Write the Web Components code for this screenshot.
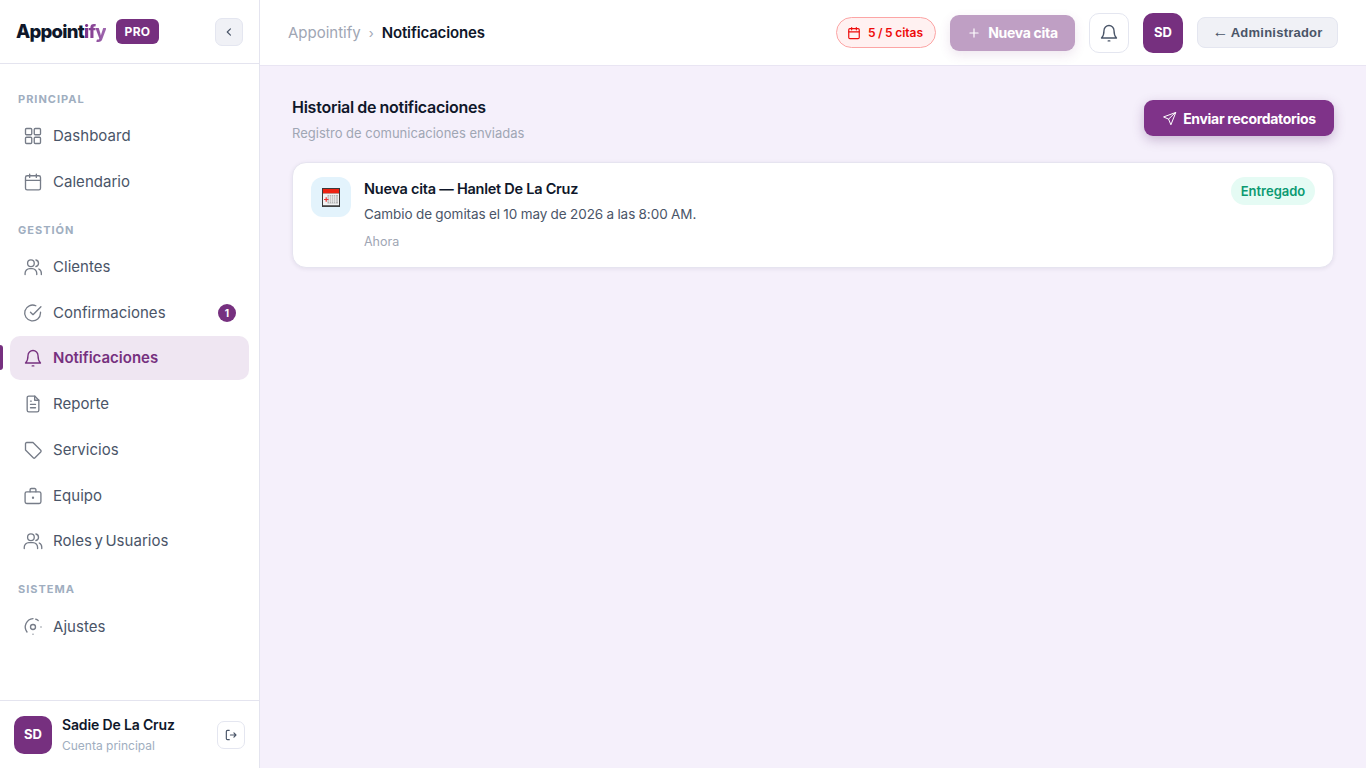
<!DOCTYPE html>
<html lang="es"><head><meta charset="utf-8"><title>Appointify</title>
<style>
html,body{margin:0;height:100%;overflow:hidden}
body{font-family:Inter,"Noto Sans",sans-serif;color:#0f172a;background:#f5f0fb}
</style></head><body>
<app-shell>
  <side-bar slot="side">
    <nav-section label="Principal">
      <nav-item icon="grid">Dashboard</nav-item>
      <nav-item icon="calendar">Calendario</nav-item>
    </nav-section>
    <nav-section label="Gestión">
      <nav-item icon="users">Clientes</nav-item>
      <nav-item icon="check" badge="1">Confirmaciones</nav-item>
      <nav-item icon="bell" active>Notificaciones</nav-item>
      <nav-item icon="file">Reporte</nav-item>
      <nav-item icon="tag">Servicios</nav-item>
      <nav-item icon="case">Equipo</nav-item>
      <nav-item icon="users2">Roles y Usuarios</nav-item>
    </nav-section>
    <nav-section label="Sistema">
      <nav-item icon="gear">Ajustes</nav-item>
    </nav-section>
  </side-bar>
  <top-bar slot="top"></top-bar>
  <page-head slot="main" title="Historial de notificaciones" sub="Registro de comunicaciones enviadas"></page-head>
  <notif-card slot="main" heading="Nueva cita — Hanlet De La Cruz" body="Cambio de gomitas el 10 may de 2026 a las 8:00 AM." time="Ahora" status="Entregado"></notif-card>
</app-shell>
<script>
const svg=(inner,s=20,sw=1.6,extra='')=>`<svg width="${s}" height="${s}" viewBox="0 0 24 24" fill="none" stroke="currentColor" stroke-width="${sw}" stroke-linecap="round" stroke-linejoin="round" ${extra}>${inner}</svg>`;
const ICONS={
 grid:'<rect x="3" y="3" width="7.5" height="7.5" rx="1.2"/><rect x="13.5" y="3" width="7.5" height="7.5" rx="1.2"/><rect x="3" y="13.5" width="7.5" height="7.5" rx="1.2"/><rect x="13.5" y="13.5" width="7.5" height="7.5" rx="1.2"/>',
 calendar:'<rect x="3" y="4.5" width="18" height="17" rx="2"/><path d="M3 10h18M8 2.5v4M16 2.5v4"/>',
 users:'<circle cx="9.5" cy="7.5" r="4"/><path d="M2.5 21v-1.5A5.5 5.5 0 0 1 8 14h3a5.5 5.5 0 0 1 5.5 5.5V21M15.5 3.6a4 4 0 0 1 0 7.8M19 14.4a5.5 5.5 0 0 1 3 5V21"/>',
 users2:'<circle cx="9.5" cy="7.5" r="4"/><path d="M1.5 21v-1.5A5.5 5.5 0 0 1 7 14h5a5.5 5.5 0 0 1 5.5 5.5V21M15.5 3.6a4 4 0 0 1 0 7.8M19.5 14.4a5.5 5.5 0 0 1 3 5V21"/>',
 check:'<path d="M21 11.1V12a9.5 9.5 0 1 1-5.6-8.7"/><path d="M21.5 4.5 12 14l-3-3"/>',
 bell:'<path d="M6 9a6 6 0 0 1 12 0c0 6 2 8 3 9H3c1-1 3-3 3-9"/><path d="M11 21.5h2"/>',
 file:'<path d="M14 2.5H7a2 2 0 0 0-2 2v15a2 2 0 0 0 2 2h10a2 2 0 0 0 2-2V7.5z"/><path d="M14 2.5v5h5M9 12.5h6M9 16.5h6M9 8.5h1"/>',
 tag:'<path d="M3 4.5A1.5 1.5 0 0 1 4.5 3H12l9.3 9.3a1.5 1.5 0 0 1 0 2.1l-6.9 6.9a1.5 1.5 0 0 1-2.1 0L3 12z"/>',
 case:'<rect x="2.5" y="7" width="19" height="14" rx="2"/><path d="M8.5 7V4.5a1.5 1.5 0 0 1 1.5-1.5h4a1.5 1.5 0 0 1 1.5 1.5V7"/><circle cx="12" cy="14" r=".6" fill="currentColor"/>',
 gear:'<circle cx="12" cy="12" r="3"/><path d="M12 2a10 10 0 0 0-7.2 16M15.2 2.6a10 10 0 0 1 3 1.6M21.6 12h.01M12 20.6h.01"/>',
 plus:'<path d="M12 5v14M5 12h14"/>',
 send:'<path d="M21.5 2.5 2.5 9.5l8 3.5 3.5 8.5zM21.5 2.5 10.5 13"/>',
 logout:'<path d="M9 4H6a2 2 0 0 0-2 2v12a2 2 0 0 0 2 2h3M11 12h9M17 8.5l3.5 3.5-3.5 3.5"/>',
 chev:'<path d="m14.5 6.5-5.5 5.5 5.5 5.5"/>'
};
function def(name,css,html){
  customElements.define(name,class extends HTMLElement{
    constructor(){super();this.attachShadow({mode:'open'});}
    connectedCallback(){this.shadowRoot.innerHTML=`<style>${css}</style>`+html(this);}
  });
}
def('app-shell',`:host{display:grid;grid-template-columns:260px 1fr;grid-template-rows:66px 1fr;height:100vh;width:100%}
 .s{grid-row:1/3;display:flex;min-height:0}.t{display:block;position:relative;z-index:1}
 .m{display:flex;flex-direction:column;padding:34px 32px 0;gap:20px;min-width:0}`,
 ()=>`<div class="s"><slot name="side"></slot></div><div class="t"><slot name="top"></slot></div><div class="m"><slot name="main"></slot></div>`);

def('app-avatar',`:host{display:flex;align-items:center;justify-content:center;background:#76307f;color:#fff;font:700 13px/1 Inter,sans-serif;flex:none;width:var(--s,40px);height:var(--s,40px);border-radius:10px}`,
 ()=>`<slot></slot>`);

def('side-bar',`:host{width:260px;box-sizing:border-box;background:#fff;border-right:1px solid #e4e4ef;display:flex;flex-direction:column;height:100%}
 header{height:64px;box-sizing:border-box;border-bottom:1px solid #e4e4ef;display:flex;align-items:center;padding:0 16px;flex:none}
 .logo{font:800 18.5px/1 Inter,sans-serif;letter-spacing:-.76px;color:#0f172a}
 .logo span{background:linear-gradient(90deg,#7b2d86,#a06ab0);-webkit-background-clip:text;background-clip:text;color:transparent}
 .pro{margin-left:10px;background:#76307f;color:#fff;font:700 12px/25px Inter,sans-serif;height:25px;width:43px;text-align:center;border-radius:6px;letter-spacing:.3px}
 .col{margin-left:auto;width:28px;height:28px;box-sizing:border-box;border:1px solid #e4e6f0;background:#f0f1f6;border-radius:7px;color:#4a5568;display:flex;align-items:center;justify-content:center}
 nav{flex:1;padding:28px 10px 0;display:flex;flex-direction:column;gap:19.7px;min-height:0}
 footer{height:68px;box-sizing:border-box;border-top:1px solid #e4e4ef;display:flex;align-items:center;padding:0 14px;gap:10px;flex:none}
 app-avatar{--s:38px}
 .w{flex:1;min-width:0;padding-top:1px}
 .n{font:600 14px/18px Inter,sans-serif;color:#0f172a;letter-spacing:-.15px}
 .r{font:400 12px/16px Inter,sans-serif;color:#a0aec0;margin-top:4px}
 .out{width:28px;height:28px;box-sizing:border-box;border:1px solid #e4e6f0;border-radius:7px;color:#4a5568;display:flex;align-items:center;justify-content:center}`,
 ()=>`<header><div class="logo">Appoint<span>ify</span></div><div class="pro">PRO</div><div class="col">${svg(ICONS.chev,14,2)}</div></header>
 <nav><slot></slot></nav>
 <footer><app-avatar>SD</app-avatar><div class="w"><div class="n">Sadie De La Cruz</div><div class="r">Cuenta principal</div></div><div class="out">${svg(ICONS.logout,14,2)}</div></footer>`);

def('nav-section',`:host{display:block}
 .h{font:700 11px/14px Inter,sans-serif;letter-spacing:1px;color:#a0aec0;text-transform:uppercase;padding:0 8px;margin-bottom:8px}
 .l{display:flex;flex-direction:column;gap:2.1px}`,
 e=>`<div class="h">${e.getAttribute('label')}</div><div class="l"><slot></slot></div>`);

def('nav-item',`:host{display:flex;align-items:center;height:43.6px;box-sizing:border-box;padding:1px 13px 0;gap:10px;border-radius:10px;color:#4a5568;font:420 15px/20px Inter,sans-serif;letter-spacing:.03px;word-spacing:-1.7px;position:relative}
 :host([active]){background:#efe6f2;color:#76307f;font-weight:600;letter-spacing:0;padding-top:0}
 :host([active]) .bar{position:absolute;left:-10px;top:9px;width:3px;height:25px;background:#76307f;border-radius:0 3px 3px 0}
 svg{flex:none;color:#767c88}
 :host([active]) svg{color:#76307f}
 .b{margin-left:auto;width:18px;height:18px;border-radius:50%;background:#76307f;color:#fff;font:700 10px/18px Inter,sans-serif;text-align:center}`,
 e=>`${e.hasAttribute('active')?'<i class="bar"></i>':''}${svg(ICONS[e.getAttribute('icon')],20,1.6)}<span><slot></slot></span>${e.getAttribute('badge')?`<span class="b">${e.getAttribute('badge')}</span>`:''}`);

def('top-bar',`:host{display:flex;align-items:center;height:66px;box-sizing:border-box;background:#fff;padding:0 28px;gap:14px;border-bottom:1px solid #e9e5f3;font-family:Inter,sans-serif}
 .crumb{margin-right:auto;display:flex;align-items:center;font:400 15px/20px Inter,sans-serif;color:#a0a6b4}
 .crumb i{font-style:normal;margin:0 8px;font-size:13px}
 .crumb b{font-weight:600;color:#0f172a;letter-spacing:-.15px}
 .chip{display:flex;align-items:center;justify-content:center;gap:7px;width:100px;height:31px;box-sizing:border-box;border:1px solid #fca5a5;background:#fff1f1;border-radius:16px;padding-right:2px;color:#ee0a0a;font:600 12px/1 Inter,sans-serif;word-spacing:-.5px}
 .new{display:flex;align-items:center;justify-content:center;gap:7px;width:125px;height:36px;border-radius:9px;background:#bf9fc4;color:#fff;font:700 14px/1 Inter,sans-serif;letter-spacing:-.3px;box-shadow:0 4px 12px rgba(118,48,127,.12)}
 .bell{width:40px;height:40px;box-sizing:border-box;border:1px solid #e4e6f0;border-radius:10px;display:flex;align-items:center;justify-content:center;color:#4a5568}
 .admin{width:141px;height:31px;box-sizing:border-box;border:1px solid #e4e6f0;background:#f0f1f6;border-radius:8px;color:#4a5568;font:700 13px/29px "Liberation Sans",sans-serif;letter-spacing:.23px;text-align:center}
 .admin span{font-size:16px;font-weight:400;letter-spacing:0;line-height:1;margin-right:-1px}`,
 ()=>`<div class="crumb">Appointify<i>›</i><b>Notificaciones</b></div>
 <div class="chip">${svg(ICONS.calendar,14,2)}<span>5 / 5 citas</span></div>
 <div class="new">${svg(ICONS.plus,14,2)}<span>Nueva cita</span></div>
 <div class="bell">${svg(ICONS.bell,20,1.6)}</div>
 <app-avatar>SD</app-avatar>
 <div class="admin"><span>←</span> Administrador</div>`);

def('page-head',`:host{display:flex;justify-content:space-between;align-items:flex-start;font-family:Inter,sans-serif;height:42px;flex:none}
 .tx{margin-top:-4px}
 h1{margin:0;font:600 16px/22px Inter,sans-serif;color:#0f172a;letter-spacing:-.25px;word-spacing:-.5px}
 p{margin:6px 0 0;font:400 13px/18px Inter,sans-serif;color:#a0a6b4}
 .send{display:flex;align-items:center;justify-content:center;gap:6px;width:190px;height:36px;border-radius:9px;background:#7f3389;color:#fff;font:700 14px/1 Inter,sans-serif;letter-spacing:-.3px;box-shadow:0 4px 12px rgba(90,40,110,.28)}
 .send span{margin-top:1px}`,
 e=>`<div class="tx"><h1>${e.getAttribute('title')}</h1><p>${e.getAttribute('sub')}</p></div><div class="send">${svg(ICONS.send,15,1.6)}<span>Enviar recordatorios</span></div>`);

def('notif-card',`:host{display:flex;align-items:flex-start;box-sizing:border-box;background:#fff;border:1px solid #e6e4f0;border-radius:14px;padding:14px 18px;gap:13px;height:106px;flex:none;box-shadow:0 1px 4px rgba(40,20,70,.08);font-family:Inter,sans-serif}
 .ic{width:40px;height:40px;border-radius:12px;background:#e3f3fc;display:flex;align-items:center;justify-content:center;flex:none}
 .t{flex:1;min-width:0}
 h2{margin:1px 0 0;font:600 14.5px/22px Inter,sans-serif;color:#0f172a;letter-spacing:-.25px}
 .b{margin-top:4px;font:400 13.5px/20px Inter,sans-serif;color:#4a5568;letter-spacing:-.05px;word-spacing:-.4px}
 .w{margin-top:10px;font:400 12.5px/16px Inter,sans-serif;color:#a0a6b4}
 .s{width:84px;height:28px;border-radius:14px;background:#e5fbf4;color:#0b9a72;font:600 13px/28px Inter,sans-serif;text-align:center;flex:none}`,
 e=>`<div class="ic"><svg width="18" height="19" viewBox="0 0 18 19"><rect x="0" y="0" width="18" height="19" fill="#3a3a3a"/><rect x="1" y="1" width="16" height="4.5" fill="#ee2211"/><rect x="1" y="5.5" width="16" height="11.5" fill="#f2f2f2"/><rect x="5.5" y="7" width="10.5" height="8.5" fill="#b4b4b4"/><path d="M7.5 7v8.5M9.5 7v8.5M11.5 7v8.5M13.5 7v8.5M5.5 9h10.5M5.5 11h10.5M5.5 13h10.5" stroke="#f2f2f2" stroke-width=".7"/><rect x="1" y="17" width="16" height="1.2" fill="#6a6a6a"/><path d="M2 11.5h4.5M4.2 9.3v4.5" stroke="#e33" stroke-width="1.2"/></svg></div>
 <div class="t"><h2>${e.getAttribute('heading')}</h2><div class="b">${e.getAttribute('body')}</div><div class="w">${e.getAttribute('time')}</div></div>
 <div class="s">${e.getAttribute('status')}</div>`);
</script>
</body></html>
